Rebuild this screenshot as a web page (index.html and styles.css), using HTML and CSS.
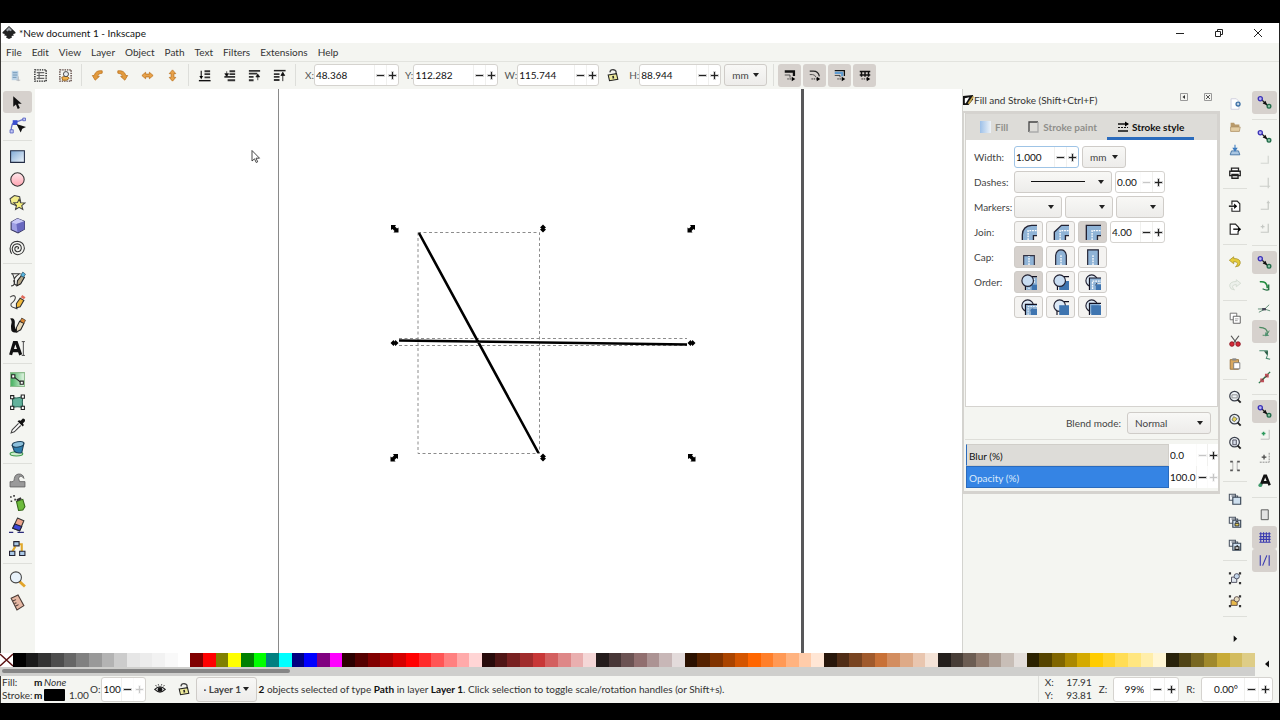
FILE: index.html
```html
<!DOCTYPE html>
<html lang="en">
<head>
<meta charset="utf-8">
<title>*New document 1 - Inkscape</title>
<link rel="stylesheet" href="styles.css">
</head>
<body>
<svg class="defs" aria-hidden="true">
  <defs>
    <linearGradient id="blue" x2="1" y2="1"><stop offset="0" stop-color="#7fa9d6"/><stop offset="1" stop-color="#eef5fb"/></linearGradient>
    <linearGradient id="pink" x2="0" y2="1"><stop offset="0" stop-color="#ffe9ec"/><stop offset="1" stop-color="#ffa3b0"/></linearGradient>
    <linearGradient id="green" x2="1"><stop offset="0" stop-color="#3fae5a"/><stop offset="1" stop-color="#e6f7e6"/></linearGradient>
    <linearGradient id="fade" x2="1"><stop offset="0" stop-color="#9dc0e8"/><stop offset="1" stop-color="#eef3f8"/></linearGradient>
  </defs>
  <symbol id="lock" viewBox="0 0 16 16"><path d="M4.500 5Q5 1.500 8.500 2T11.500 5.500V8" fill="none" stroke="#444" stroke-width="1.500"/><path d="M2.500 8L12 6.500l1.500 6.500L4 14.500z" fill="#ece99a" stroke="#222" stroke-width="1.200"/><path d="M8 9l.5 3" stroke="#222" stroke-width="1.800"/></symbol>
  <symbol id="snap" viewBox="0 0 16 16"><path d="M4 4l8 8" stroke="#222" stroke-width="1.200"/><circle cx="3.500" cy="4" r="2.200" fill="#b9b4ee" stroke="#3a32b8" stroke-width="1.400"/><circle cx="12.800" cy="12" r="2" fill="#8fc0a4" stroke="#1f6a48" stroke-width="1.400"/><path d="M6 9l3-3 2 5z" fill="#111"/></symbol>
  <symbol id="page-stack" viewBox="0 0 16 16"><path d="M1.500 2.500h7v7h-7zM4 4.500h7v7" fill="#eef1f5" stroke="#4a5462" stroke-width="1.200"/><path d="M5.500 6h9v8h-9z" fill="#cfe0ef" stroke="#3a4656" stroke-width="1.300"/></symbol>
  <symbol id="lens" viewBox="0 0 16 16"><circle cx="7.500" cy="7" r="5.500" fill="#eef3f8" stroke="#3a3f4a" stroke-width="1.400"/><path d="M11 11l3.500 3.500" stroke="#222" stroke-width="2.200"/></symbol>
</svg>
<div class="app">
  <header class="titlebar">
    <svg class="logo" viewBox="0 0 14 14"><path d="M7 0L13.500 6.200Q14 7.600 11 8l1 1.500-2.500.5.500 1.500-3 1.500-3-1.500.8-1.500L2 9.200 3 8Q0 7.600.5 6.200z" fill="#222"/><path d="M7 1l3 3-1.500 1.200L7 4.300 5.300 5.500 4 4z" fill="#9aa0a6"/></svg>
    <h1>*New document 1 - Inkscape</h1>
    <div class="winbtns">
      <button aria-label="Minimize"><svg viewBox="0 0 10 10"><path d="M1 5.500h8" stroke="#222" fill="none"/></svg></button>
      <button aria-label="Restore"><svg viewBox="0 0 10 10"><path d="M1.500 3.500h5v5h-5zM3.500 3V1.500h5v5H7" stroke="#222" fill="none"/></svg></button>
      <button aria-label="Close"><svg viewBox="0 0 10 10"><path d="M1 1l8 8M9 1L1 9" stroke="#222" fill="none"/></svg></button>
    </div>
  </header>
  <nav class="menubar">
    <button>File</button><button>Edit</button><button>View</button><button>Layer</button><button>Object</button><button>Path</button><button>Text</button><button>Filters</button><button>Extensions</button><button>Help</button>
  </nav>
  <div class="toolbar">
    <div class="tgroup">
      <button aria-label="Select all"><svg viewBox="0 0 16 16"><path d="M4 3h7v10H4z" fill="#bcd3e6"/><path d="M5 5h5M5 7.500h5M5 10h4" stroke="#6f95b5"/><path d="M9 13h4M11 9v5" stroke="#b5b9bd"/></svg></button>
      <button aria-label="Select all in layers"><svg viewBox="0 0 16 16"><path d="M2 2h12v12H2z" fill="none" stroke="#222" stroke-dasharray="1.500 1" stroke-width="1.500"/><path d="M4 5h8M4 8h8M4 11h8M6.500 4v8" stroke="#666" stroke-width="1.300"/></svg></button>
      <button aria-label="Deselect"><svg viewBox="0 0 16 16"><path d="M2 2h12v12H2z" fill="none" stroke="#5b4540" stroke-dasharray="1.500 1" stroke-width="1.500"/><path d="M4 10l5-2 3 3-3 2H5z" fill="#efb04a" stroke="#a06a20"/><circle cx="8.500" cy="6.500" r="2.700" fill="#e9eef4" stroke="#444"/></svg></button>
    </div>
    <div class="tgroup">
      <button aria-label="Rotate left"><svg viewBox="0 0 16 16"><path d="M13 3Q6 2 4.500 8H2.500l3 5 4.500-4H8Q8.500 5.500 13 5.500z" fill="#e39a3c" stroke="#b9701c" stroke-width=".8"/></svg></button>
      <button aria-label="Rotate right"><svg viewBox="0 0 16 16"><path d="M3 3q7-1 8.500 5h2l-3 5L6 9h2Q7.500 5.500 3 5.500z" fill="#e39a3c" stroke="#b9701c" stroke-width=".8"/></svg></button>
      <button aria-label="Flip horizontal"><svg viewBox="0 0 16 16"><path d="M2 8l4-3.500v2h4v-2L14 8l-4 3.500v-2H6v2z" fill="#e8a24a" stroke="#b9701c" stroke-width=".8"/></svg></button>
      <button aria-label="Flip vertical"><svg viewBox="0 0 16 16"><path d="M8 2l3.500 4h-2v4h2L8 14l-3.500-4h2V6h-2z" fill="#e8a24a" stroke="#b9701c" stroke-width=".8"/></svg></button>
    </div>
    <div class="tgroup">
      <button aria-label="Lower to bottom"><svg viewBox="0 0 16 16"><path d="M2 13.500h12.500" stroke="#111" stroke-width="1.500"/><path d="M4.500 3v6" stroke="#111" stroke-width="1.200"/><path d="M2.500 8.500h4l-2 3.500z"/><path d="M8 3.500h6M8 6.500h6M8 10h6" stroke="#333" stroke-width="2"/></svg></button>
      <button aria-label="Lower"><svg viewBox="0 0 16 16"><path d="M8 3.500h6M8 6.500h6M2.500 9.500H14M6 13h8" stroke="#333" stroke-width="2"/><path d="M5 3.500v3M3 6h4l-2 3z" stroke="#222" stroke-width=".8"/></svg></button>
      <button aria-label="Raise"><svg viewBox="0 0 16 16"><path d="M2 3h12M2 6h9M2 9.500h5M2 13h5" stroke="#333" stroke-width="2"/><path d="M11.500 13V8M9.500 9.500h4l-2-3z" stroke="#222" stroke-width=".8"/></svg></button>
      <button aria-label="Raise to top"><svg viewBox="0 0 16 16"><path d="M2 2.800h12.500" stroke="#222" stroke-width="1.600"/><path d="M2 6.500h6M2 9.500h6M2 12.800h6" stroke="#333" stroke-width="2"/><path d="M11.500 14V7M9.500 8h4l-2-3.500z" stroke="#222" stroke-width="1"/></svg></button>
    </div>
    <div class="fields">
      <label for="fx">X:</label><span class="spin w85"><input id="fx" value="48.368"><button aria-label="Decrease" class="minus"></button><button aria-label="Increase" class="plus"></button></span>
      <label for="fy">Y:</label><span class="spin w85"><input id="fy" value="112.282"><button aria-label="Decrease" class="minus"></button><button aria-label="Increase" class="plus"></button></span>
      <label for="fw">W:</label><span class="spin w82"><input id="fw" value="115.744"><button aria-label="Decrease" class="minus"></button><button aria-label="Increase" class="plus"></button></span>
      <button class="lockbtn" aria-label="Lock ratio"><svg viewBox="0 0 16 16"><use href="#lock"/></svg></button>
      <label for="fh">H:</label><span class="spin w82"><input id="fh" value="88.944"><button aria-label="Decrease" class="minus"></button><button aria-label="Increase" class="plus"></button></span>
      <span class="combo w43"><select aria-label="Unit"><option>mm</option></select></span>
    </div>
    <div class="toggles">
      <button aria-label="Scale stroke width"><svg viewBox="0 0 16 16"><path d="M2 4h10.500v5" fill="none" stroke="#111" stroke-width="2.600"/><path d="M2 8h6v3" fill="none" stroke="#444"/><path d="M5 12.500h6" stroke="#111" stroke-dasharray="1.500 1"/><path d="M10 10l4 2.500-4 2.500z"/></svg></button>
      <button aria-label="Scale corners"><svg viewBox="0 0 16 16"><path d="M2 3.500h4q6 0 7 6" fill="none" stroke="#222" stroke-width="1.300"/><path d="M2 7.500h3q3 0 4 3" fill="none" stroke="#444"/><path d="M4 12.500h7" stroke="#111" stroke-dasharray="1.500 1"/><path d="M10 10l4 2.500-4 2.500z"/></svg></button>
      <button aria-label="Move gradients"><svg viewBox="0 0 16 16"><path d="M2 3h11v6" fill="none" stroke="#111" stroke-width="1.500"/><path d="M2 5.500h8.500v4" fill="none" stroke="#5f9bd0" stroke-width="2.500"/><path d="M2 8.500h6v2" fill="none" stroke="#333"/><path d="M5 12.500h6" stroke="#111" stroke-dasharray="1.500 1"/><path d="M10 10l4 2.500-4 2.500z"/></svg></button>
      <button aria-label="Move patterns"><svg viewBox="0 0 16 16"><path d="M2 4h12M2 8h12M4 3v7M8 3v7M12 3v7" fill="none" stroke="#111" stroke-width="1.700"/><path d="M4 12.500h7" stroke="#111" stroke-dasharray="1.500 1"/><path d="M10 10l4 2.500-4 2.500z"/></svg></button>
    </div>
  </div>
  <main class="work">
    <div class="desk">
      <aside class="toolbox" aria-label="Tools">
        <button class="on" aria-label="Selector"><svg viewBox="0 0 16 16"><path d="M4 2v10l2.500-2.200L8.200 14l2-.9-1.800-4H12z" fill="#111"/></svg></button>
        <button aria-label="Node"><svg viewBox="0 0 16 16"><path d="M2 14Q2 5 6 5L14 2" fill="none" stroke="#6a72c8" stroke-width="1.300"/><path d="M3.500 3H8v4.500H3.500z" fill="#3b4fd0"/><path d="M1 12h3v3H1zM13 1h2.500v2.500H13z" fill="#c7cdf5" stroke="#5560c0" stroke-width=".8"/><path d="M7 6.500l4 8 1.500-3.500 3.500-1.500z" fill="#111"/></svg></button>
        <hr>
        <button aria-label="Rectangle"><svg viewBox="0 0 16 16"><path d="M1.500 2.500h13v11h-13z" fill="url(#blue)" stroke="#222c44"/></svg></button>
        <button aria-label="Ellipse"><svg viewBox="0 0 16 16"><circle cx="8" cy="8" r="6.300" fill="url(#pink)" stroke="#333"/></svg></button>
        <button aria-label="Star"><svg viewBox="0 0 16 16"><path d="M5 1.500l5 1 1 5-4 3.500-5-2L1 4.500z" fill="#f2ec8a" stroke="#444"/><path d="M9.500 5l1.500 3.200 4 .3-3 2.500 1 3.500-3.500-2-3.300 2 .8-3.700-2.500-2.500 3.500-.2z" fill="#f7f07c" stroke="#444"/></svg></button>
        <button aria-label="3D box"><svg viewBox="0 0 16 16"><path d="M2 5l6-3.500L14.500 4v7.500L8.500 15 2 12z" fill="#9f9fe4" stroke="#33335a"/><path d="M2 5l6-3.500L14.500 4 7 6.500z" fill="#c9c9f7"/><path d="M7 6.500L14.500 4v7.500L8 14.500z" fill="#6a6ac0"/></svg></button>
        <button aria-label="Spiral"><svg viewBox="0 0 16 16"><path d="M8 8.500Q9.500 8 8.800 6.700 7 5.500 5.700 7.200 4.800 10 7.500 11 11 11.200 11.600 7.800 11.500 4 7.800 3.600 3.500 4 3 8.200 3.300 13 8 13.800 13.500 13.500 14.500 8 14.200 1.800 8 1.200 1.500 1.500 1 8 1.100 11 2.500 13" fill="none" stroke="#333"/></svg></button>
        <hr>
        <button aria-label="Pen"><svg viewBox="0 0 16 16"><path d="M2 2.500h8Q3 7 5 11 5 14 2 14M3 2q3 6 2 10 3 3 5-1" fill="none" stroke="#333"/><path d="M8 9l4-5 2.500 2L11 12l-3.500 2z" fill="#b7a98a" stroke="#222"/><path d="M11 4l2-3 2.500 2-2 3z" fill="#57b5e0" stroke="#245" stroke-width=".6"/></svg></button>
        <button aria-label="Pencil"><svg viewBox="0 0 16 16"><path d="M1 3q4-3 5 0Q6 6 2 9q-1 3 3 4l3 1" fill="none" stroke="#444"/><path d="M7 9l3.500-5 3.500 2-3.500 6L7 13z" fill="#f0b83a" stroke="#333"/><path d="M11 3l1.500-2 3 2L14 5z" fill="#e06a5a"/></svg></button>
        <button aria-label="Calligraphy"><svg viewBox="0 0 16 16"><path d="M1 1.500q4-1.500 4.500 3Q5 11 7 12l2 2q-7 2-7-3Q1.500 9 2.500 5 2.500 3 1 1.500z" fill="#111"/><path d="M7 10l3-6 4 2-3 6-4 2z" fill="#e8d9b8" stroke="#222"/><path d="M10.500 4L12 1l3.500 2L14 6z" fill="#d9832e" stroke="#222" stroke-width=".6"/></svg></button>
        <button aria-label="Text"><svg viewBox="0 0 16 16"><path d="M1.500 14L5 2.500h2L11 14M3 10h6.500" fill="none" stroke="#111" stroke-width="2.900"/><path d="M12 1.500h3M13.500 1.500v13M12 14.500h3" stroke="#444" stroke-width=".9"/></svg></button>
        <hr>
        <button aria-label="Gradient"><svg viewBox="0 0 16 16"><path d="M1.500 1.500h13v13h-13z" fill="url(#green)" stroke="#8dbb8d"/><path d="M4 5l7.500 6" stroke="#222"/><path d="M2.500 3.500h3v3h-3zM10.500 9.500h3v3h-3z" fill="#fff" stroke="#222"/></svg></button>
        <button aria-label="Mesh"><svg viewBox="0 0 16 16"><path d="M3 3q5 2 10-1-1 6 0 11-5-2-10 0 1-5 0-10z" fill="#62b29c" stroke="#2b6658"/><path d="M1.500 1.500h3v3h-3zM11.500 1h3v3h-3zM1.500 11.500h3v3h-3zM11.500 11.500h3v3h-3z" fill="#fff" stroke="#222"/></svg></button>
        <button aria-label="Dropper"><svg viewBox="0 0 16 16"><path d="M9 6L3 12l-1 3 3-1 6-6" fill="#fff" stroke="#444"/><path d="M8 4l5 5 1-1.500-1-1.500 2-2q.5-2.500-2-2.500l-2 2L9.500 3z" fill="#111"/></svg></button>
        <button aria-label="Paint bucket"><svg viewBox="0 0 16 16"><ellipse cx="7" cy="13" rx="6" ry="2" fill="#cdeccb" stroke="#3c9a4a"/><path d="M3 5l11-2-2 9q-5 1-7-1.500z" fill="#2f7fae" stroke="#1c3f58"/><ellipse cx="8.500" cy="4" rx="5.500" ry="2.500" transform="rotate(-10 9 4)" fill="#8cc0dc" stroke="#1c3f58"/></svg></button>
        <hr>
        <button aria-label="Tweak"><svg viewBox="0 0 16 16"><path d="M1 10q4 1 4-3 1-5 6-4 3 1 3 4-2-3-4-2-2 2 0 5h5v5H1z" fill="#9a9a9a" stroke="#5e5e5e" stroke-width=".8"/></svg></button>
        <button aria-label="Spray"><svg viewBox="0 0 16 16"><path d="M1 2h1.500v1.500H1zM4 1h1.500v1.500H4zM1.500 6H3v1.500H1.500zM5 4.500h1.500V6H5z" fill="#333"/><path d="M7 7l6-2 2 7-2 3-4 .5z" fill="#6dbb3c" stroke="#35681a"/><path d="M7 5l4-2 1 2-4.500 2z" fill="#333"/></svg></button>
        <button aria-label="Eraser"><svg viewBox="0 0 16 16"><path d="M8 1l6 2.500-4 9.500-6.500-2.500z" fill="#eda48c" stroke="#333"/><path d="M5.500 6.500L12 9l-2 4-6.500-2.500z" fill="#3c46d8" stroke="#223"/><path d="M0 14.500h4M8 14.500h6" stroke="#2a2a7a" stroke-width="1.300"/></svg></button>
        <button aria-label="Connector"><svg viewBox="0 0 16 16"><path d="M6 6L3 11M9 4h3v7" fill="none" stroke="#e0a82c" stroke-width="2"/><path d="M4.500 1.500h5v4h-5zM.500 10.500h5v4h-5zM10 10.500h5v4h-5z" fill="#a9c8e6" stroke="#223"/></svg></button>
        <hr>
        <button aria-label="Zoom"><svg viewBox="0 0 16 16"><path d="M10 10l5 4.500" stroke="#e3a52a" stroke-width="2.600"/><circle cx="6.500" cy="6" r="5.200" fill="#e8f2fb" stroke="#444"/></svg></button>
        <button aria-label="Measure"><svg viewBox="0 0 16 16"><path d="M2 4l6.500-3 5.500 10-6.500 4z" fill="#e6b8a4" stroke="#4a3a34"/><path d="M3.500 6.500l3-1.200M5 9l2-.8M6 11.500l3-1.500" stroke="#4a3a34"/></svg></button>
      </aside>
      <section class="canvas" aria-label="Drawing canvas">
        <svg class="drawing">
          <g transform="translate(-35 -89)">
            <path d="M278.500 80v600" stroke="#8a8a8a"/>
            <path d="M802.500 80v600" stroke="#58585a" stroke-width="3"/>
            <g fill="none" stroke="#8c8c8c" stroke-dasharray="3 2.500">
              <path d="M418 232.500h121.500v221H418zM399 338.500h288M399 345.500h288"/>
            </g>
            <path d="M419 233l119.500 220M399 340.500l288 4" stroke="#000" stroke-width="2.600"/>
            <path d="M391 225h5l-1 1.500 2 2 1.500-1v5h-5l1-1.500-2-2-1.500 1z"/>
            <path d="M391 225h5l-1 1.500 2 2 1.500-1v5h-5l1-1.500-2-2-1.500 1z" transform="translate(297 229)"/>
            <path d="M695 225h-5l1 1.500-2 2-1.500-1v5h5l-1-1.500 2-2 1.500 1z"/>
            <path d="M695 225h-5l1 1.500-2 2-1.500-1v5h5l-1-1.500 2-2 1.500 1z" transform="translate(-297 229)"/>
            <path d="M543 224.500l3 3-1.500 1 1.500 1-3 3-3-3 1.500-1-1.500-1z"/>
            <path d="M543 453.500l3 3-1.500 1 1.500 1-3 3-3-3 1.500-1-1.500-1z"/>
            <path d="M390.500 343l3-3 1 1.500 1-1.500 3 3-3 3-1-1.500-1 1.500z"/>
            <path d="M687.500 343l3-3 1 1.500 1-1.500 3 3-3 3-1-1.500-1 1.500z"/>
            <path d="M252 150.500v10.500l2.500-2.200 1.700 3.700 1.500-.7-1.700-3.600h3.500z" fill="#fff" stroke="#333" stroke-width=".9"/>
          </g>
        </svg>
      </section>
      <aside class="dock">
        <div class="dockhead">
          <svg viewBox="0 0 12 12" class="fsicon"><path d="M0 1l11-1v5L6 11H0z" fill="#111"/><path d="M2 3.500l5-1-4 6.500H2z" fill="#fff"/><path d="M5 9l5.500-8L12 2 7 10z" fill="#c8a850"/></svg>
          <h2>Fill and Stroke (Shift+Ctrl+F)</h2>
          <button aria-label="Iconify"><svg viewBox="0 0 8 8"><path d="M.500.500h7v7h-7z" fill="none" stroke="#999"/><path d="M5 2v4L2.500 4z" fill="#333"/></svg></button>
          <button aria-label="Close dialog"><svg viewBox="0 0 8 8"><path d="M.500.500h7v7h-7z" fill="none" stroke="#999"/><path d="M2 2l4 4M6 2L2 6" stroke="#555"/></svg></button>
        </div>
        <div class="panel">
          <div class="notebook">
            <div class="tabs" role="tablist">
              <button role="tab"><svg viewBox="0 0 12 12"><path d="M0 0h11v12H0z" fill="url(#fade)"/></svg>Fill</button>
              <button role="tab"><svg viewBox="0 0 12 12"><path d="M1 11V1h9" fill="none" stroke="#444" stroke-width="1.300"/><path d="M10 1v10H1" fill="none" stroke="#aaa" stroke-width="1.300"/></svg>Stroke paint</button>
              <button role="tab" aria-selected="true"><svg viewBox="0 0 12 12"><path d="M1 3h10M1 10h10" stroke="#111" stroke-width="1.400"/><path d="M1 6.500h10" stroke="#111" stroke-dasharray="2 1"/><path d="M8 .500L12 3 8 5.500z"/></svg>Stroke style</button>
            </div>
            <div class="form">
              <label for="sw">Width:</label>
              <div class="row"><span class="spin w65 focus"><input id="sw" value="1.000"><button aria-label="Decrease" class="minus"></button><button aria-label="Increase" class="plus"></button></span><span class="combo w44"><select aria-label="Width unit"><option>mm</option></select></span></div>
              <label for="ds">Dashes:</label>
              <div class="row"><span class="combo dash"><select id="ds"><option></option></select></span><span class="spin w50"><input aria-label="Dash offset" value="0.00"><button aria-label="Decrease" class="minus off"></button><button aria-label="Increase" class="plus"></button></span></div>
              <label for="m1">Markers:</label>
              <div class="row"><span class="combo w48"><select id="m1"><option></option></select></span><span class="combo w48"><select aria-label="Mid marker"><option></option></select></span><span class="combo w48"><select aria-label="End marker"><option></option></select></span></div>
              <span>Join:</span>
              <div class="row">
                <button class="tb" aria-label="Round join"><svg viewBox="0 0 18 18"><path d="M1.500 18V12Q2 2 12 1.500h6V13h-4v5z" fill="#8fb3d6"/><path d="M1.500 18V12Q2 2 12 1.500h6M18 13h-4v5" fill="none" stroke="#223" stroke-width="1.500"/><path d="M8 18V7.500h10" fill="none" stroke="#fff" stroke-width="1.500" stroke-dasharray="2 1"/></svg></button>
                <button class="tb" aria-label="Bevel join"><svg viewBox="0 0 18 18"><path d="M1.500 18V9l8-7.500H18V13h-4v5z" fill="#8fb3d6"/><path d="M1.500 18V9l8-7.500H18M18 13h-4v5" fill="none" stroke="#223" stroke-width="1.500"/><path d="M8 18V7.500h10" fill="none" stroke="#fff" stroke-width="1.500" stroke-dasharray="2 1"/></svg></button>
                <button class="tb on" aria-label="Miter join"><svg viewBox="0 0 18 18"><path d="M1.500 18V1.500H18V13h-4v5z" fill="#8fb3d6"/><path d="M1.500 18V1.500H18M18 13h-4v5" fill="none" stroke="#223" stroke-width="1.500"/><path d="M8 18V7.500h10" fill="none" stroke="#fff" stroke-width="1.500" stroke-dasharray="2 1"/></svg></button>
                <span class="spin w55"><input aria-label="Miter limit" value="4.00"><button aria-label="Decrease" class="minus"></button><button aria-label="Increase" class="plus"></button></span>
              </div>
              <span>Cap:</span>
              <div class="row">
                <button class="tb on" aria-label="Butt cap"><svg viewBox="0 0 18 18"><path d="M3 18V7.500h12V18" fill="#8fb3d6" stroke="#334" stroke-width="1.300"/><path d="M9 18V8" stroke="#fff" stroke-width="1.500" stroke-dasharray="2 1"/></svg></button>
                <button class="tb" aria-label="Round cap"><svg viewBox="0 0 18 18"><path d="M3 18V7Q4 1 9 1T15 7v11" fill="#8fb3d6" stroke="#223" stroke-width="1.300"/><path d="M9 18V7" stroke="#fff" stroke-width="1.500" stroke-dasharray="2 1"/></svg></button>
                <button class="tb" aria-label="Square cap"><svg viewBox="0 0 18 18"><path d="M3 18V1h12v17" fill="#8fb3d6" stroke="#223" stroke-width="1.300"/><path d="M9 18V7" stroke="#fff" stroke-width="1.500" stroke-dasharray="2 1"/></svg></button>
              </div>
              <span>Order:</span>
              <div class="row">
                <button class="tb on" aria-label="Fill, stroke, markers"><svg viewBox="0 0 18 18"><path d="M9 4h9v14H6V9z" fill="#8fb3d6"/><path d="M12 12h6v6h-6z" fill="#3f75b0"/><path d="M8 3h10M5 18V10" stroke="#112" stroke-width="1.300"/><path d="M15 5v6M8 16h3" fill="none" stroke="#fff" stroke-dasharray="2 1"/><circle cx="7.500" cy="7.500" r="6.500" fill="#c9ddf2" stroke="#223" stroke-width="1.300"/></svg></button>
                <button class="tb" aria-label="Stroke, fill, markers"><svg viewBox="0 0 18 18"><path d="M9 8h9v10H7V9z" fill="#3f75b0"/><path d="M8 3h10M5 18V10" stroke="#112" stroke-width="1.300"/><circle cx="7.500" cy="7.500" r="6.500" fill="#c9ddf2" stroke="#223" stroke-width="1.300"/></svg></button>
                <button class="tb" aria-label="Fill, markers, stroke"><svg viewBox="0 0 18 18"><circle cx="7.500" cy="7.500" r="6.500" fill="#dce9f6" stroke="#223" stroke-width="1.300"/><path d="M5 18V4.500h13v6h-6V18z" fill="#8fb3d6"/><path d="M5 18V4.500h13" fill="none" stroke="#112" stroke-width="1.300"/><path d="M12 11.500h6V18h-6z" fill="#3f75b0"/><path d="M8.500 17V8H18" fill="none" stroke="#fff" stroke-width="1.500" stroke-dasharray="2 1"/></svg></button>
              </div>
              <span></span>
              <div class="row">
                <button class="tb" aria-label="Markers, fill, stroke"><svg viewBox="0 0 18 18"><circle cx="7.500" cy="7.500" r="6.500" fill="#dce9f6" stroke="#223" stroke-width="1.300"/><path d="M5 18V6h13v5h-7v7z" fill="#8fb3d6"/><path d="M5 18V6h13" fill="none" stroke="#112" stroke-width="1.300"/><path d="M11 11h7v7h-7z" fill="#3f75b0"/><path d="M8 18V8.500h10" fill="none" stroke="#fff" stroke-dasharray="2 1"/></svg></button>
                <button class="tb" aria-label="Stroke, markers, fill"><svg viewBox="0 0 18 18"><path d="M8 3h10M4.500 18v-6" stroke="#112" stroke-width="1.300"/><circle cx="7.500" cy="7.500" r="6.500" fill="#dce9f6" stroke="#223" stroke-width="1.300"/><path d="M7 7h11v11H7z" fill="#3f75b0"/></svg></button>
                <button class="tb" aria-label="Markers, stroke, fill"><svg viewBox="0 0 18 18"><circle cx="7.500" cy="7.500" r="6.500" fill="#dce9f6" stroke="#223" stroke-width="1.300"/><path d="M5 18V5h13" fill="#8fb3d6" stroke="#112" stroke-width="1.300"/><path d="M7 7h11v11H7z" fill="#3f75b0"/></svg></button>
              </div>
            </div>
          </div>
          <div class="blend"><label for="bm">Blend mode:</label><span class="combo w84"><select id="bm"><option>Normal</option></select></span></div>
          <div class="scales">
            <div class="scale"><label class="track" for="bl">Blur (%)</label><input id="bl" value="0.0"><button aria-label="Decrease" class="minus off"></button><button aria-label="Increase" class="plus"></button></div>
            <div class="scale full"><label class="track" for="op">Opacity (%)</label><input id="op" value="100.0"><button aria-label="Decrease" class="minus"></button><button aria-label="Increase" class="plus off"></button></div>
          </div>
        </div>
      </aside>
      <aside class="commands" aria-label="Commands">
        <button aria-label="New"><svg viewBox="0 0 16 16"><path d="M3.500 2h6l3 3v9h-9z" fill="#fff" stroke="#ccd"/><circle cx="11.500" cy="8" r="3" fill="#3a6ea5"/><path d="M10 8h3M11.500 6.500v3" stroke="#fff"/></svg></button>
        <button aria-label="Open"><svg viewBox="0 0 16 16"><path d="M3 3h4l1 2h5v8H3z" fill="#b89a6a"/><path d="M3 8h11l-1 5H3z" fill="#e3cda2" stroke="#a88b60" stroke-width=".7"/></svg></button>
        <button aria-label="Save"><svg viewBox="0 0 16 16"><path d="M4 9h8l1.500 4.500h-11z" fill="#a9c6e2" stroke="#3f6fa0"/><path d="M8 2v5M6 6h4L8 9z" fill="#3a7abf" stroke="#3a7abf" stroke-width="1.200"/></svg></button>
        <button aria-label="Print"><svg viewBox="0 0 16 16"><path d="M4 2.500h8v3H4zM2 6h12v5H2zM4.500 9.500h7V14h-7z" fill="#fff" stroke="#222" stroke-width="1.500"/></svg></button>
        <hr>
        <button aria-label="Import"><svg viewBox="0 0 16 16"><path d="M4.500 6.500v-4h6l3 3v8.500h-9V10" fill="#fff" stroke="#222" stroke-width="1.300"/><path d="M1 8.200h6" stroke="#111" stroke-width="1.600"/><path d="M7 5l3.500 3.200L7 11.500z"/></svg></button>
        <button aria-label="Export"><svg viewBox="0 0 16 16"><path d="M11.500 6V5.500l-3-3h-6V14h9v-4" fill="#fff" stroke="#222" stroke-width="1.300"/><path d="M6 8.200h6" stroke="#111" stroke-width="1.600"/><path d="M11.500 5L15 8.200l-3.500 3.300z"/></svg></button>
        <hr>
        <button aria-label="Undo"><svg viewBox="0 0 16 16"><path d="M1.500 6l5-4v2q8 0 7.500 5.500-.5 4-5.500 4 2.500-1.500 2.300-4-.3-2-4.300-2v2.500z" fill="#e6cc3a" stroke="#a08a1c" stroke-width=".8"/></svg></button>
        <button aria-label="Redo" class="faint"><svg viewBox="0 0 16 16"><path d="M14.500 6l-5-4v2Q1.500 4 2 9.500q.5 4 5.500 4-2.500-1.500-2.300-4 .3-2 4.300-2v2.500z" fill="#e6ece6" stroke="#b0c0b0"/></svg></button>
        <hr>
        <button aria-label="Copy"><svg viewBox="0 0 16 16"><path d="M2.500 2.500h7.500v7.500H2.500z" fill="#fff" stroke="#666"/><path d="M6 6h8v8H6z" fill="#fff" stroke="#555"/><path d="M8 9h4M8 11h3" stroke="#999"/></svg></button>
        <button aria-label="Cut"><svg viewBox="0 0 16 16"><path d="M3.500 2l6 8M12.500 2l-6 8" stroke="#555" stroke-width="1.400"/><circle cx="4.500" cy="11.500" r="2.600" fill="#d42a38" stroke="#8a1420"/><circle cx="11.500" cy="11.500" r="2.600" fill="#d42a38" stroke="#8a1420"/></svg></button>
        <button aria-label="Paste"><svg viewBox="0 0 16 16"><path d="M2.500 3h9.500v11H2.500z" fill="#d8a860" stroke="#94703a"/><path d="M5 1.500h4.500v2.500H5z" fill="#888"/><path d="M6.500 6.500h7v7h-7z" fill="#fff" stroke="#777"/></svg></button>
        <hr>
        <button aria-label="Zoom selection"><svg viewBox="0 0 16 16"><use href="#lens"/><path d="M4.500 5.500h6v3.500h-6z" fill="none" stroke="#888"/></svg></button>
        <button aria-label="Zoom drawing"><svg viewBox="0 0 16 16"><use href="#lens"/><path d="M4.500 8l2-4 4 2.500-3 3.500z" fill="#e4d45a" stroke="#555" stroke-width=".8"/></svg></button>
        <button aria-label="Zoom page"><svg viewBox="0 0 16 16"><use href="#lens"/><path d="M5.500 4.500h4v5.500h-4z" fill="#d5dce8" stroke="#445"/></svg></button>
        <button aria-label="Zoom page width"><svg viewBox="0 0 16 16"><path d="M5.500 3v10M10.500 3v10" stroke="#aaa"/><path d="M2.500 2h3v2h-3zM10.500 2h3v2h-3zM2.500 12h3v2h-3zM10.500 12h3v2h-3z" fill="#555"/></svg></button>
        <hr>
        <button aria-label="Duplicate"><svg viewBox="0 0 16 16"><use href="#page-stack"/></svg></button>
        <button aria-label="Clone"><svg viewBox="0 0 16 16"><use href="#page-stack"/><path d="M8 9.500h4.500v3H8z" fill="#e8d05a" stroke="#222"/><path d="M9 9V7.500h2.500V9" fill="none" stroke="#222"/></svg></button>
        <button aria-label="Unlink clone"><svg viewBox="0 0 16 16"><use href="#page-stack"/><path d="M8 10h4.500v3H8zM10.500 10V8" fill="#eee" stroke="#222" stroke-width="1.300"/></svg></button>
        <hr>
        <button aria-label="Group"><svg viewBox="0 0 16 16"><path d="M1 1.500h2.500v2.500H1zM12.500 1.500H15v2.500h-2.500zM1 12.500h2.500V15H1zM12.500 12.500H15V15h-2.500z" fill="#333"/><path d="M4 7h6v6H4z" fill="#dfe6ee" stroke="#445"/><circle cx="10" cy="6" r="3" fill="#c3d6ea" stroke="#445"/></svg></button>
        <button aria-label="Ungroup"><svg viewBox="0 0 16 16"><path d="M1 1.500h2.500v2.500H1zM12.500 1.500H15v2.500h-2.500zM1 12.500h2.500V15H1zM12.500 12.500H15V15h-2.500z" fill="#333"/><path d="M3.500 7h7v6h-7z" fill="#e8b94a" stroke="#544"/><circle cx="10" cy="6" r="3" fill="#e6dcc0" stroke="#544"/></svg></button>
        <hr>
        <button aria-label="More commands" class="more"><svg viewBox="0 0 16 16"><path d="M6.500 5v7.500l4-3.700z" fill="#111"/></svg></button>
      </aside>
      <aside class="snapbar" aria-label="Snapping">
        <button class="on" aria-label="Enable snapping"><svg viewBox="0 0 16 16"><use href="#snap"/></svg></button>
        <hr>
        <button aria-label="Snap bounding boxes"><svg viewBox="0 0 16 16"><use href="#snap"/></svg></button>
        <button class="faint" aria-label="Snap to edges"><svg viewBox="0 0 16 16"><path d="M12 4v8H4" fill="none" stroke="#b5bab5" stroke-width="1.300"/></svg></button>
        <button class="faint" aria-label="Snap to corners"><svg viewBox="0 0 16 16"><path d="M12 3v9H3M10 12h4M12 10v4" fill="none" stroke="#a5aaa5" stroke-width="1.300"/></svg></button>
        <button class="faint" aria-label="Snap to edge midpoints"><svg viewBox="0 0 16 16"><path d="M12 3v9H4M10.500 5h3" fill="none" stroke="#9a9f9a" stroke-width="1.300"/></svg></button>
        <button class="faint" aria-label="Snap to box centers"><svg viewBox="0 0 16 16"><path d="M12 3v9H4M4 6h4M6 4v4" fill="none" stroke="#9a9f9a" stroke-width="1.300"/></svg></button>
        <hr>
        <button class="on" aria-label="Snap nodes"><svg viewBox="0 0 16 16"><use href="#snap"/></svg></button>
        <button aria-label="Snap to paths"><svg viewBox="0 0 16 16"><path d="M3 4q8-1 8 7" fill="none" stroke="#1f8a3c" stroke-width="1.600"/><path d="M6 11.500q4 2 6.500 1V7" fill="none" stroke="#1f6a3c" stroke-width="1.400"/></svg></button>
        <button aria-label="Snap to intersections"><svg viewBox="0 0 16 16"><path d="M2 12q6-2 11-8M1 8.500q7-1 13 2" fill="none" stroke="#5a8a70"/><path d="M5.500 7.500h4V10h-4z" fill="#445"/></svg></button>
        <button class="on" aria-label="Snap to cusp nodes"><svg viewBox="0 0 16 16"><path d="M2.500 3.500q9 0 8.500 7" fill="none" stroke="#4a8a60" stroke-width="1.300"/><path d="M6 12q5 1 7-5" fill="none" stroke="#4a8a60"/><path d="M9 8.500l4 4-4.500.5z" fill="#4f9070"/></svg></button>
        <button aria-label="Snap to smooth nodes"><svg viewBox="0 0 16 16"><path d="M2.500 4H11q1 4-1 8l4 1" fill="none" stroke="#4a8a70" stroke-width="1.200"/><path d="M7.500 4.500h4L11 9z" fill="#2a5a44"/></svg></button>
        <button aria-label="Snap to line midpoints"><svg viewBox="0 0 16 16"><path d="M2 14L14 2" stroke="#2e7a4e" stroke-width="1.500"/><path d="M3.500 9h4v4h-4zM8.500 4h4v4h-4z" fill="#c0505a"/><path d="M5 11l6-5" stroke="#2e5a3e"/></svg></button>
        <hr>
        <button class="on" aria-label="Snap others"><svg viewBox="0 0 16 16"><use href="#snap"/></svg></button>
        <button aria-label="Snap object centers"><svg viewBox="0 0 16 16"><path d="M13 3v10H4" fill="none" stroke="#bbb"/><path d="M5 7h4M7 5v4" stroke="#2e9a5e" stroke-width="1.600"/></svg></button>
        <button aria-label="Snap rotation centers"><svg viewBox="0 0 16 16"><path d="M13 3v10H3" fill="none" stroke="#888" stroke-dasharray="2 1"/><path d="M5 7.500h5M7.500 5v5" stroke="#444" stroke-width="1.300"/></svg></button>
        <button aria-label="Snap text baseline"><svg viewBox="0 0 16 16"><path d="M4 13L8 3h1.500L13.500 13M6 10h6" fill="none" stroke="#111" stroke-width="2.700"/><circle cx="3.500" cy="13" r="2" fill="#3f9a6c"/></svg></button>
        <hr>
        <button aria-label="Snap page border"><svg viewBox="0 0 16 16"><path d="M4.500 3h7.500v10.500H4.500z" fill="#e3e3e3" stroke="#555"/></svg></button>
        <button class="on" aria-label="Snap to grids"><svg viewBox="0 0 16 16"><path d="M4 2.500v11M7 2.500v11M10 2.500v11M13 2.500v11M2.500 4h12M2.500 7h12M2.500 10h12M2.500 13h12" stroke="#3a3ab0" stroke-width="1.200"/></svg></button>
        <button class="on" aria-label="Snap to guides"><svg viewBox="0 0 16 16"><path d="M3.500 2.500v11M13 2.500v11M6 13.500l4.500-11" stroke="#3a3ab0" stroke-width="1.200"/></svg></button>
      </aside>
    </div>
    <div class="palettebar">
      <div class="strip">
        <div class="palette" id="palette" aria-label="Colour palette"><button class="none" aria-label="No colour"><svg viewBox="0 0 13 14"><path d="M0 0h13v14H0z" fill="#fff"/><path d="M0 1l13 12M13 1L0 13" stroke="#5a1010" stroke-width="1.300"/></svg></button></div>
        <div class="scroll"><div class="thumb"></div></div>
      </div>
      <button class="palmenu" aria-label="Palette menu"><svg viewBox="0 0 8 8"><path d="M6 .500v7L2 4z" fill="#111"/></svg></button>
    </div>
  </main>
  <footer class="status">
    <div class="style">
      <span>Fill:</span><b>m</b><i>None</i>
      <span>Stroke:</span><b>m</b><span class="stroke"><span class="chip"></span>1.00</span>
    </div>
    <div class="opacity"><label for="so">O:</label><span class="spin w45"><input id="so" value="100"><button aria-label="Decrease" class="minus"></button><button aria-label="Increase" class="plus off"></button></span></div>
    <button class="sicon" aria-label="Toggle layer visibility"><svg viewBox="0 0 16 16"><path d="M2 8.500q6-6 12 0-6 6-12 0z" fill="#ddd" stroke="#222" stroke-width="1.300"/><circle cx="8" cy="8.500" r="2.600" fill="#111"/><path d="M4 5L3 3.500M6.500 4L6 2.500M9.500 4l.5-1.500M12 5l1-1.500" stroke="#222"/></svg></button>
    <button class="sicon" aria-label="Toggle layer lock"><svg viewBox="0 0 16 16"><use href="#lock"/></svg></button>
    <span class="combo layer"><select aria-label="Layer"><option>· Layer 1</option></select></span>
    <p class="msg"><b>2</b> objects selected of type <b>Path</b> in layer <b>Layer 1</b>. Click selection to toggle scale/rotation handles (or Shift+s).</p>
    <dl class="coords"><dt>X:</dt><dd>17.91</dd><dt>Y:</dt><dd>93.81</dd></dl>
    <label for="z">Z:</label><span class="spin w66 big"><input id="z" value="99%"><button aria-label="Zoom out" class="minus"></button><button aria-label="Zoom in" class="plus"></button></span>
    <label class="rot" for="r">R:</label><span class="spin w72 big"><input id="r" value="0.00°"><button aria-label="Rotate left" class="minus"></button><button aria-label="Rotate right" class="plus"></button></span>
  </footer>
</div>
<script src="palette.js"></script>
</body>
</html>
```

FILE: styles.css
```css
* { box-sizing: border-box; }
body {
  margin: 0;
  background: #000;
  color: #333;
  font: 10px/12px Lato, "Open Sans", sans-serif;
}
button, input, select { font: inherit; color: inherit; margin: 0; padding: 0; border: 0; background: none; }
h1, h2, p, dl, dd, hr { margin: 0; font: inherit; }
svg { display: block; }
.defs { position: absolute; width: 0; height: 0; }

.app {
  height: calc(100vh - 40px);
  margin-top: 23px;
  display: flex;
  flex-direction: column;
  background: #f4f5f1;
  border-left: 1px solid #3a3836;
  border-right: 1px solid #222;
}

.titlebar { display: flex; align-items: center; height: 20px; flex: none; background: #fff; color: #111; padding: 0 2px 1px 0; }
.logo { width: 14px; height: 14px; margin: 0 3px 0 1px; }
.titlebar h1 { flex: 1; }
.winbtns { display: flex; }
.winbtns button { width: 39px; display: grid; place-items: center; }
.winbtns svg { width: 10px; height: 10px; }

.menubar { display: flex; gap: 10px; height: 18px; padding: 0 5px 1px; flex: none; }

.toolbar { display: flex; align-items: center; height: 28px; flex: none; border-top: 1px solid #e2e3de; padding-bottom: 1px; }
.tgroup { display: flex; padding: 0 3px; border-right: 1px solid #dddeda; }
.tgroup:first-child { padding-left: 2px; }
.tgroup button { width: 25px; height: 22px; display: grid; place-items: center; }
.tgroup svg { width: 15px; height: 15px; }
.fields { display: flex; align-items: center; padding: 0 6px 0 9px; border-right: 1px solid #dddeda; }
.fields label { padding-left: 6px; color: #555; }
.fields label:first-child { padding-left: 0; }
.lockbtn { width: 21px; display: grid; place-items: center; margin-left: 3px; }
.lockbtn svg { width: 14px; height: 14px; }
.fields .combo { margin-left: 3px; }
.toggles { display: flex; gap: 2px; padding-left: 4px; }
.toggles button { width: 23px; height: 23px; border-radius: 3px; background: #d6d1cd; display: grid; place-items: center; }
.toggles svg { width: 14px; height: 14px; }

.spin { display: flex; height: 22px; background: #fff; border: 1px solid #d5d3cf; border-radius: 3px; color: #111; flex: none; overflow: hidden; }
.spin.focus { border-color: #9fc4e6; }
.spin input { flex: 1; min-width: 0; width: 0; padding-left: 1px; }
.minus, .plus { width: 12px; flex: none; display: grid; place-items: center; border-left: 1px solid #f0f0ee; }
.minus::before, .plus::before { content: ""; grid-area: 1 / 1; width: 7px; height: 1px; background: #222; outline: 1px solid #2223; }
.plus::after { content: ""; grid-area: 1 / 1; width: 1px; height: 7px; background: #222; outline: 1px solid #2223; }
.off { opacity: .25; }
.w43 { width: 43px; } .w44 { width: 44px; } .w45 { width: 45px; } .w48 { width: 48px; }
.w50 { width: 50px; } .w55 { width: 55px; } .w65 { width: 65px; } .w66 { width: 66px; }
.w72 { width: 72px; } .w82 { width: 82px; } .w84 { width: 84px; } .w85 { width: 85px; }
.big .minus, .big .plus { width: 14px; }
.big input { text-align: right; padding-right: 6px; }
.big { height: 25px; }

.combo { display: flex; position: relative; height: 22px; flex: none; color: #444; }
.combo select {
  appearance: none;
  width: 100%;
  padding-left: 7px;
  border: 1px solid #cfccc8;
  border-radius: 3px;
  background: linear-gradient(#f8f8f6, #edecea);
}
.combo::after {
  content: "";
  position: absolute;
  right: 8px;
  top: calc(50% - 2px);
  border: 3px solid transparent;
  border-top: 4px solid #222;
  border-bottom: 0;
  pointer-events: none;
}
.dash { width: 98px; }
.dash::before { content: ""; position: absolute; left: 17px; right: 27px; top: 10px; height: 1px; background: #111; }

.work { flex: 1; min-height: 0; display: flex; flex-direction: column; }
.desk { flex: 1; min-height: 0; display: flex; }
.toolbox, .commands, .snapbar { display: flex; flex-direction: column; flex: none; }
.toolbox { width: 34px; padding: 2px 3px 0 2px; }
.toolbox button { height: 22px; margin-bottom: 1px; border-radius: 3px; display: grid; place-items: center; flex: none; }
.toolbox svg { width: 17px; height: 17px; }
.toolbox .on, .snapbar .on, .tb.on { background: #d6d1cd; }
hr { border: 0; height: 1px; background: #dedfda; flex: none; }
.toolbox hr { margin: 3px 0 4px; }

.canvas { flex: 1; min-width: 0; background: #fff; overflow: hidden; }
.drawing { width: 100%; height: 100%; }

.dock { width: 259px; flex: none; border-left: 1px solid #d3d3cf; padding-right: 1px; }
.dockhead { display: flex; align-items: center; height: 22px; }
.dockhead h2 { flex: 1; }
.dockhead button { width: 24px; height: 12px; display: grid; place-items: center; align-self: flex-start; margin-top: 2px; }
.dockhead svg { width: 8px; height: 8px; }
.dockhead .fsicon { width: 11px; height: 11px; }
.panel { border: 1px solid #d5d3cf; border-width: 2px 2px 3px 1px; padding: 0 0 2px 1px; }
.notebook { border: 1px solid #d5d3cf; background: #fff; height: 294px; }
.tabs { display: flex; height: 26px; background: #dddcd8; padding-left: 4px; font-weight: 700; color: #8f8f8b; }
.tabs button { display: flex; align-items: center; gap: 3px; padding: 0 10px; border-bottom: 3px solid transparent; border-top: 3px solid transparent; }
.tabs svg { width: 12px; height: 12px; }
.tabs [aria-selected] { color: #111; border-bottom-color: #2a6bbd; }
.form { display: grid; grid-template-columns: 40px 1fr; grid-auto-rows: 22px; row-gap: 3px; align-items: center; padding: 6px 0 0 8px; color: #444; }
.row { display: flex; gap: 3px; }
.tb { width: 29px; height: 22px; border: 1px solid #cfccc8; border-radius: 3px; background: #f4f3f1; display: grid; place-items: center; }
.tb svg { width: 16px; height: 16px; }
.blend { display: flex; align-items: center; justify-content: flex-end; gap: 6px; padding: 5px 7px 5px 0; border-bottom: 1px solid #deded9; color: #444; }
.scales { padding: 4px 0 1px 1px; }
.scale { display: flex; height: 22px; background: #fff; color: #111; }
.track { flex: 1; display: flex; align-items: center; padding: 2px 0 0 2px; background: #dddcd8; border: 1px solid #d0cec9; border-left: 1px solid #2a6bbd; }
.full .track { background: #3584e4; border-color: #2a6bbd; color: #dcebfb; }
.scale input { width: 27px; padding-left: 1px; }
.scale .minus, .scale .plus { width: 11px; }

.commands { width: 29px; padding: 3px 3px 0 2px; }
.commands button, .snapbar button { height: 23px; display: grid; place-items: center; flex: none; border-radius: 3px; }
.commands svg { width: 14px; height: 14px; }
.commands hr { margin: 4px 0 5px; }
.commands .more { height: 32px; }
.snapbar { width: 29px; padding: 2px 2px 0; }
.snapbar svg { width: 15px; height: 15px; }
.snapbar hr { margin: 5px 0; }
.faint { opacity: .5; }

.palettebar { display: flex; height: 23px; flex: none; margin-left: -1px; }
.strip { flex: 1; min-width: 0; }
.palette { display: flex; height: 14px; }
.swatch { flex: 1; }
.none { width: 13px; flex: none; }
.scroll { height: 9px; background: #cfcfcd; padding: 2px; }
.thumb { width: 23%; height: 4px; border-radius: 2px; background: #868686; }
.palmenu { width: 24px; height: 22px; display: grid; place-items: center; }
.palmenu svg { width: 8px; height: 8px; }

.status { display: flex; align-items: center; height: 27px; flex: none; padding: 0 0 1px 1px; white-space: nowrap; }
.style { display: grid; grid-template-columns: 32px 10px 46px; grid-auto-rows: 13px; }
.style b { color: #111; }
.stroke { display: flex; gap: 4px; }
.chip { width: 21px; height: 12px; background: #000; border-radius: 1px; }
.opacity { display: flex; align-items: center; }
.status .opacity .spin { height: 25px; }
.opacity input { padding-left: 2px; }
.sicon { width: 24px; display: grid; place-items: center; margin-left: 2px; }
.sicon + .sicon { margin-left: 0; }
.sicon svg { width: 14px; height: 14px; }
.layer { width: 61px; height: 25px; font-weight: 700; margin: 0 1px 0 0; }
.msg { flex: 1; min-width: 0; overflow: hidden; padding-left: 1px; }
.msg b { color: #111; }
.coords { display: grid; grid-template-columns: 16px 31px; border-left: 1px solid #dddeda; padding: 0 7px 0 6px; line-height: 13px; }
.coords dd { text-align: right; }
.status > label { padding-right: 6px; }
.status > .rot { padding-left: 7px; }
.status > .big:last-child { margin-right: 6px; }
```

FILE: palette.js
```js
const colours = `
000000 1a1a1a 333333 4d4d4d 666666 808080 999999 b3b3b3 cccccc e6e6e6 ececec f2f2f2 f9f9f9 ffffff
800000 ff0000 808000 ffff00 008000 00ff00 008080 00ffff 000080 0000ff 800080 ff00ff
2b0000 550000 800000 aa0000 d40000 ff0000 ff2a2a ff5555 ff8080 ffaaaa ffd5d5
280b0b 501616 782121 a02c2c c83737 d35f5f de8787 e9afaf f4d7d7
241c1c 483737 6c5353 916f6f ac9393 c8b7b7 e3dbdb
2b1100 552200 803300 aa4400 d45500 ff6600 ff7f2a ff9955 ffb380 ffccaa ffe6d5
28170b 502d16 784421 a05a2c c87137 d38d5f deaa87 e9c6af f4e3d7
241f1c 483e37 6c5d53 917c6f ac9d93 c8beb7 e3dedb
2b2200 554400 806600 aa8800 d4aa00 ffcc00 ffd42a ffdd55 ffe680 ffeeaa fff6d5
28220b 504416 786721 a0892c c8ab37 d3bc5f decd87`.trim().split(/\s+/);

const palette = document.getElementById("palette");
for (const hex of colours) {
  const swatch = document.createElement("button");
  swatch.className = "swatch";
  swatch.style.background = "#" + hex;
  swatch.setAttribute("aria-label", "#" + hex);
  palette.append(swatch);
}
```
